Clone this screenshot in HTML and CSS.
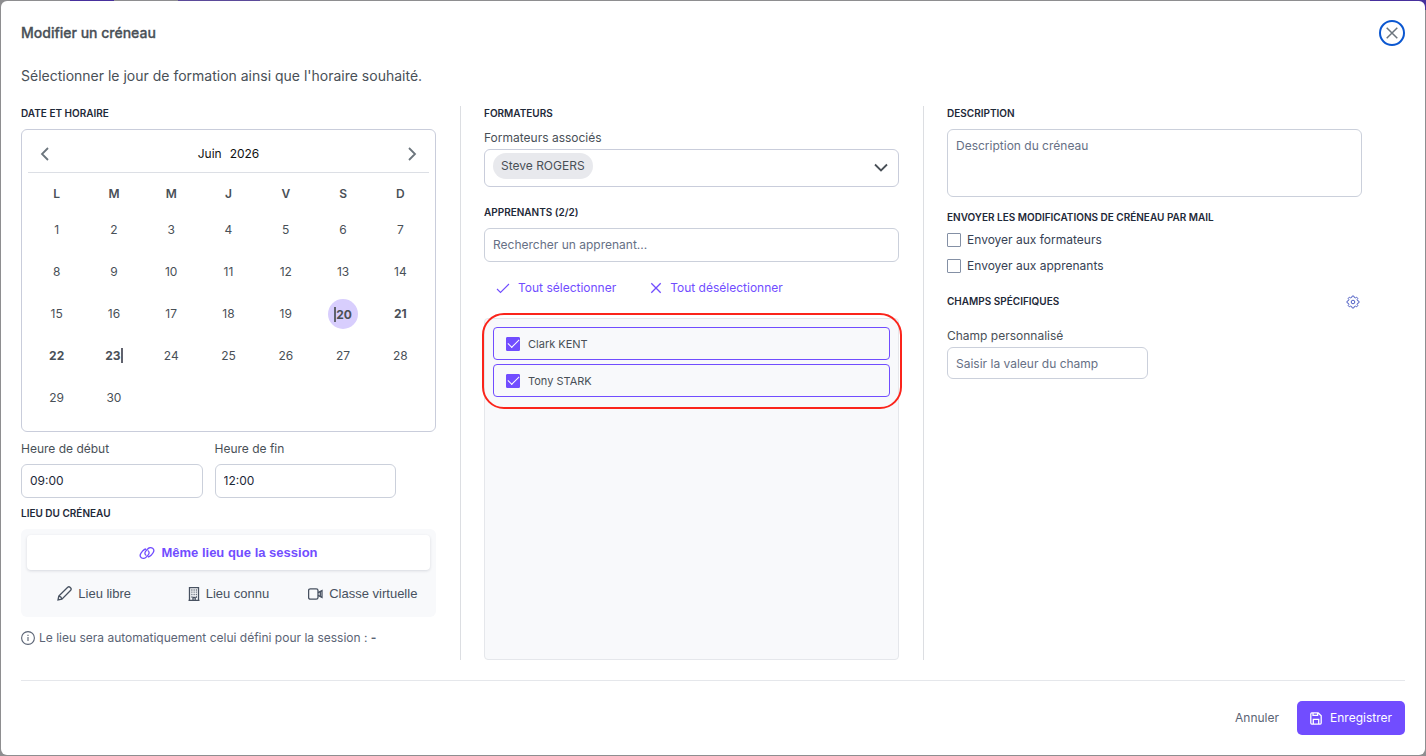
FILE: index.html
```html
<!DOCTYPE html>
<html lang="fr">
<head>
<meta charset="utf-8">
<title>Modifier un créneau</title>
<link rel="stylesheet" href="styles.css">
</head>
<body>
<main class="modal" role="dialog" aria-labelledby="modal-title">
  <header class="modal-header">
    <h1 class="modal-title" id="modal-title">Modifier un créneau</h1>
    <button class="close" type="button" aria-label="Fermer">
      <svg viewBox="0 0 12 12" width="12" height="12"><path d="M.7.7l10.600 10.600M11.300.7L.7 11.300"/></svg>
    </button>
  </header>
  <p class="intro">Sélectionner le jour de formation ainsi que l'horaire souhaité.</p>

  <form class="columns">
    <section class="column">
      <h2 class="heading">Date et horaire</h2>
      <div class="calendar">
        <div class="calendar-nav">
          <button class="nav" type="button" aria-label="Mois précédent"><svg viewBox="0 0 10 14" width="10" height="14"><path d="M8 1L2 7l6 6"/></svg></button>
          <div class="month"><span>Juin</span><span>2026</span></div>
          <button class="nav" type="button" aria-label="Mois suivant"><svg viewBox="0 0 10 14" width="10" height="14"><path d="M2 1l6 6-6 6"/></svg></button>
        </div>
        <table class="days">
          <thead><tr><th>L</th><th>M</th><th>M</th><th>J</th><th>V</th><th>S</th><th>D</th></tr></thead>
          <tbody>
            <tr><td>1</td><td>2</td><td>3</td><td>4</td><td>5</td><td>6</td><td>7</td></tr>
            <tr><td>8</td><td>9</td><td>10</td><td>11</td><td>12</td><td>13</td><td>14</td></tr>
            <tr><td>15</td><td>16</td><td>17</td><td>18</td><td>19</td><td><span class="day-selected"><b class="range-start">20</b></span></td><td><b>21</b></td></tr>
            <tr><td><b>22</b></td><td><b class="range-end">23</b></td><td>24</td><td>25</td><td>26</td><td>27</td><td>28</td></tr>
            <tr><td>29</td><td>30</td><td></td><td></td><td></td><td></td><td></td></tr>
          </tbody>
        </table>
      </div>
      <div class="times">
        <div class="time"><label class="label" for="start">Heure de début</label><input class="input" id="start" type="text" value="09:00"></div>
        <div class="time"><label class="label" for="end">Heure de fin</label><input class="input" id="end" type="text" value="12:00"></div>
      </div>
      <h2 class="heading place-heading">Lieu du créneau</h2>
      <div class="places">
        <button class="place place-active" type="button">
          <svg class="icon" viewBox="0 0 16 12" width="16" height="12"><path d="M7.300 8.500C5.700 7.700 5.500 5.800 6.600 4.300L8.300 2.300C9.800.6 12.200.2 13.600 1.300c1.500 1.200 1.400 3.300.2 4.900l-1.700 2.100c-1 1.100-2.100 1.600-3.200 1.700M8.700 3.500c1.600.8 1.800 2.700.7 4.200L7.700 9.700c-1.500 1.700-3.900 2.100-5.300 1C.9 9.500 1 7.400 2.200 5.800l1.700-2.100C4.900 2.600 6 2.100 7.100 2"/></svg>
          Même lieu que la session</button>
        <button class="place" type="button">
          <svg class="icon" viewBox="0 0 15 15" width="15" height="15"><path d="M1 14l.8-3.900L10.700 1.300q1.200-1 2.300 0l.7.700q1 1.100 0 2.300L4.900 13.200zM2 10.100q2.200.3 2.900 2.900"/></svg>
          Lieu libre</button>
        <button class="place" type="button">
          <svg class="icon" viewBox="0 0 12 14" width="12" height="14"><path d="M.5 13.500h11M1.500 13.500V.6h9v12.900M5 13.500v-3h2.200v3"/><path d="M3.400 3h1M5.600 3h1M7.800 3h1M3.400 5.200h1M5.600 5.200h1M7.800 5.200h1M3.400 7.500h1M5.600 7.500h1M7.800 7.500h1M3.400 10h1M8 10h1"/></svg>
          Lieu connu</button>
        <button class="place" type="button">
          <svg class="icon" viewBox="0 0 15 12" width="15" height="12"><rect x=".6" y=".8" width="9.400" height="10.400" rx="1.800"/><path d="M10 4.600l4-2v6.800l-4-2M12.300 3.500v5"/></svg>
          Classe virtuelle</button>
      </div>
      <p class="note">
        <svg class="icon-thin" viewBox="0 0 14 14" width="14" height="14"><circle cx="7" cy="7" r="6.400"/><path d="M7 6v4M7 3.700v1.200"/></svg>
        <span>Le lieu sera automatiquement celui défini pour la session : <b>-</b></span></p>
    </section>

    <section class="column">
      <h2 class="heading">Formateurs</h2>
      <span class="label tight" id="trainers-label">Formateurs associés</span>
      <button class="select" type="button" aria-haspopup="listbox" aria-labelledby="trainers-label">
        <span class="chip">Steve ROGERS</span>
        <svg class="chevron" viewBox="0 0 14 9" width="14" height="9"><path d="M1 1.500l6 6 6-6"/></svg>
      </button>
      <h2 class="heading learners-heading">Apprenants (2/2)</h2>
      <input class="input" type="text" placeholder="Rechercher un apprenant..." aria-label="Rechercher un apprenant">
      <div class="bulk">
        <button class="link-button" type="button"><svg class="icon-thin" viewBox="0 0 14 14" width="14" height="14"><path d="M1 8l3.500 3.500L13 3"/></svg>Tout sélectionner</button>
        <button class="link-button" type="button"><svg class="icon" viewBox="0 0 12 14" width="12" height="14"><path d="M1.300 2.300l9.400 9.400M10.700 2.300l-9.400 9.400"/></svg>Tout désélectionner</button>
      </div>
      <div class="learners">
        <label class="learner"><input class="check" type="checkbox" checked>Clark KENT</label>
        <label class="learner"><input class="check" type="checkbox" checked>Tony STARK</label>
        <div class="highlight"></div>
      </div>
    </section>

    <section class="column">
      <h2 class="heading"><label for="description">Description</label></h2>
      <textarea class="input textarea" id="description" placeholder="Description du créneau"></textarea>
      <h2 class="heading mail-heading">Envoyer les modifications de créneau par mail</h2>
      <label class="option"><input class="check" type="checkbox">Envoyer aux formateurs</label>
      <label class="option"><input class="check" type="checkbox">Envoyer aux apprenants</label>
      <div class="fields-head">
        <h2 class="heading">Champs spécifiques</h2>
        <button class="gear" type="button" aria-label="Configurer les champs">
          <svg viewBox="0 0 14 14" width="14" height="14"><path d="M5.700 2.500L6.200 1h1.600l.5 1.500 1 .4 1.400-.7 1.100 1.100-.7 1.400.4 1 1.500.5v1.600l-1.500.5-.4 1 .7 1.400-1.100 1.100-1.400-.7-1 .4L7.800 13H6.200l-.5-1.500-1-.4-1.400.7-1.100-1.100.7-1.400-.4-1L1 7.800V6.200l1.500-.5.4-1-.7-1.400 1.100-1.100 1.400.7z"/><circle cx="7" cy="7" r="1.800"/></svg>
        </button>
      </div>
      <label class="label custom-label" for="custom">Champ personnalisé</label>
      <input class="input custom" id="custom" type="text" placeholder="Saisir la valeur du champ">
    </section>
  </form>

  <footer class="modal-footer">
    <button class="cancel" type="button">Annuler</button>
    <button class="save" type="button">
      <svg class="icon" viewBox="0 0 12 13" width="12" height="13"><path d="M1.800.9h6.400L11.200 3.700v7.400q0 1-1 1H1.800q-1 0-1-1V1.900q0-1 1-1zM3 1v2.400h4.600V1M3.300 12V7.400h5.400V12"/></svg>
      Enregistrer</button>
  </footer>
</main>
</body>
</html>
```
FILE: styles.css
```css
* { box-sizing: border-box; }

body {
  margin: 0;
  min-height: 100vh;
  display: flex;
  padding: 1px;
  background: linear-gradient(90deg, #8e8e90 70px, #47309d 70px 114px, #8e8e90 114px 178px, #5b4a9a 178px 260px, #8e8e90 260px calc(100% - 56px), #47309d calc(100% - 56px)) top / 100% 10px no-repeat, #8e8e90;
  font-family: Inter, "Liberation Sans", sans-serif;
  font-size: 12px;
  line-height: 18px;
  color: #495057;
}

h1, h2, p { margin: 0; }

button, input, textarea { font: inherit; color: inherit; }

button {
  padding: 0;
  border: 0;
  background: none;
  cursor: pointer;
}

svg {
  display: block;
  flex: none;
  fill: none;
  stroke: currentColor;
}

.icon { stroke-width: 1.3; }
.icon-thin { stroke-width: 1.1; }

.modal {
  flex: 1;
  display: flex;
  flex-direction: column;
  padding: 19px 20px 20px;
  border-radius: 6px;
  background: #fff;
}

.modal-header {
  display: flex;
  justify-content: space-between;
  align-items: center;
}

.modal-title {
  font-size: 14px;
  font-weight: 500;
  -webkit-text-stroke: .3px currentColor;
}

.close {
  display: grid;
  place-items: center;
  width: 26px;
  height: 26px;
  border: 2px solid #0b57d0;
  border-radius: 50%;
  color: #6c757d;
}

.close svg { stroke-width: 1.5; }

.intro {
  margin-top: 20px;
  font-size: 14px;
  line-height: 20px;
}

.columns {
  flex: 1;
  display: flex;
  margin-top: 20px;
}

.column {
  flex: 1;
  box-sizing: content-box;
  display: flex;
  flex-direction: column;
  padding: 0 24px 0 23px;
  border-right: 1px solid #dcdee2;
}

.column:first-child { padding-left: 0; }

.column:last-child {
  padding-right: 43px;
  border-right: 0;
}

.heading {
  margin-bottom: 8px;
  font-size: 10px;
  line-height: 15px;
  font-weight: 600;
  text-transform: uppercase;
  color: #1e2938;
}

.calendar {
  padding: 0 6px 12px;
  border: 1px solid #c9cddb;
  border-radius: 6px;
}

.calendar-nav {
  display: flex;
  justify-content: space-between;
  align-items: center;
  height: 43px;
  padding: 5px 12px 0;
  border-bottom: 1px solid #dcdfe5;
}

.nav { color: #6c757d; }
.nav svg { stroke-width: 1.8; }

.month {
  display: flex;
  gap: 8px;
  color: #111;
}

.days {
  width: 100%;
  table-layout: fixed;
  border-collapse: collapse;
  text-align: center;
}

.days th {
  height: 36px;
  padding: 6px 0 0;
  font-weight: 600;
}

.days td {
  height: 42px;
  padding: 0;
}

.day-selected {
  display: inline-grid;
  place-items: center;
  width: 30px;
  height: 30px;
  border-radius: 50%;
  background: #d8cefd;
}

.range-start, .range-end {
  display: inline-block;
  line-height: 15px;
  border: 0 solid #60626d;
}

.range-start { border-left-width: 2px; }
.range-end { border-right-width: 2px; }

.times {
  display: flex;
  gap: 12px;
  margin-top: 8px;
  padding-right: 40px;
}

.time { flex: 1; }

.label {
  display: block;
  margin-bottom: 6px;
}

.label.tight { margin-bottom: 2px; }

.input {
  display: block;
  width: 100%;
  height: 34px;
  padding: 0 8px 2px;
  border: 1px solid #cbd0db;
  border-radius: 6px;
  background: #fff;
  color: #1e2938;
}

.input::placeholder {
  color: #667085;
  opacity: 1;
}

.place-heading { margin-top: 8px; }

.places {
  display: grid;
  grid-template-columns: repeat(3, 1fr);
  gap: 6px 0;
  padding: 6px;
  border-radius: 6px;
  background: #f8f9fb;
}

.place {
  display: flex;
  justify-content: center;
  align-items: center;
  gap: 6px;
  height: 35px;
  border-radius: 4px;
  font-family: "Liberation Sans", Arial, sans-serif;
  font-size: 13px;
  color: #475160;
}

.place-active {
  grid-column: 1 / -1;
  background: #fff;
  box-shadow: 0 1px 3px rgba(20, 30, 60, .14);
  font-weight: 700;
  color: #714dff;
}

.note {
  display: flex;
  align-items: center;
  gap: 4px;
  margin-top: 12px;
  color: #5b6475;
}

.select {
  display: flex;
  justify-content: space-between;
  align-items: center;
  height: 38px;
  padding: 0 10px 4px 8px;
  border: 1px solid #c9cddb;
  border-radius: 6px;
}

.chip {
  padding: 4px 8px;
  border-radius: 13px;
  background: #e8e9ed;
}

.chevron {
  margin-top: 3px;
  stroke-width: 1.8;
}

.learners-heading { margin-top: 18px; }

.bulk {
  display: flex;
  gap: 34px;
  margin-top: 16px;
  padding: 0 12px;
}

.link-button {
  display: flex;
  align-items: center;
  gap: 8px;
  line-height: 20px;
  color: #714dff;
}

.learners {
  position: relative;
  flex: 1;
  display: flex;
  flex-direction: column;
  gap: 4px;
  margin-top: 20px;
  padding: 8px;
  border: 1px solid #e5e7eb;
  border-radius: 4px;
  background: #f8f9fb;
}

.learner {
  display: flex;
  align-items: center;
  gap: 8px;
  height: 33px;
  padding: 0 12px;
  border: 1px solid #714dff;
  border-radius: 4px;
  font-size: 11px;
}

.highlight {
  position: absolute;
  top: -6px;
  left: -3px;
  right: -4px;
  height: 96px;
  border: 2px solid #fb241b;
  border-radius: 22px;
  pointer-events: none;
}

.check {
  appearance: none;
  flex: none;
  width: 14px;
  height: 14px;
  margin: 0;
  border: 1px solid #8490a5;
  border-radius: 1px;
  background: #fff;
}

.check:checked {
  display: grid;
  place-items: center;
  border-color: #714dff;
  background: #714dff;
}

.check:checked::after {
  content: "";
  width: 10px;
  height: 5px;
  margin-bottom: 3px;
  border: solid #fff;
  border-width: 0 0 1px 1px;
  transform: rotate(-45deg);
}

.textarea {
  height: 68px;
  padding: 7px 8px;
  resize: none;
}

.mail-heading {
  margin-top: 13px;
  margin-bottom: 6px;
}

.option {
  display: flex;
  align-items: center;
  gap: 6px;
  margin-bottom: 8px;
  color: #364153;
}

.fields-head {
  display: flex;
  justify-content: space-between;
  align-items: center;
  margin-top: 11px;
  padding-right: 2px;
}

.fields-head .heading { margin-bottom: 0; }

.gear { color: #4f5fc4; }

.custom-label {
  margin-top: 18px;
  margin-bottom: 2px;
}

.custom {
  width: 201px;
  height: 32px;
  padding-bottom: 0;
}

.modal-footer {
  display: flex;
  justify-content: flex-end;
  gap: 18px;
  margin-top: 20px;
  padding-top: 20px;
  border-top: 1px solid #e5e7eb;
}

.cancel { color: #5b6475; }

.save {
  display: flex;
  align-items: center;
  gap: 8px;
  height: 34px;
  padding: 0 13px;
  border-radius: 5px;
  background: #714dff;
  color: #fff;
}
```
